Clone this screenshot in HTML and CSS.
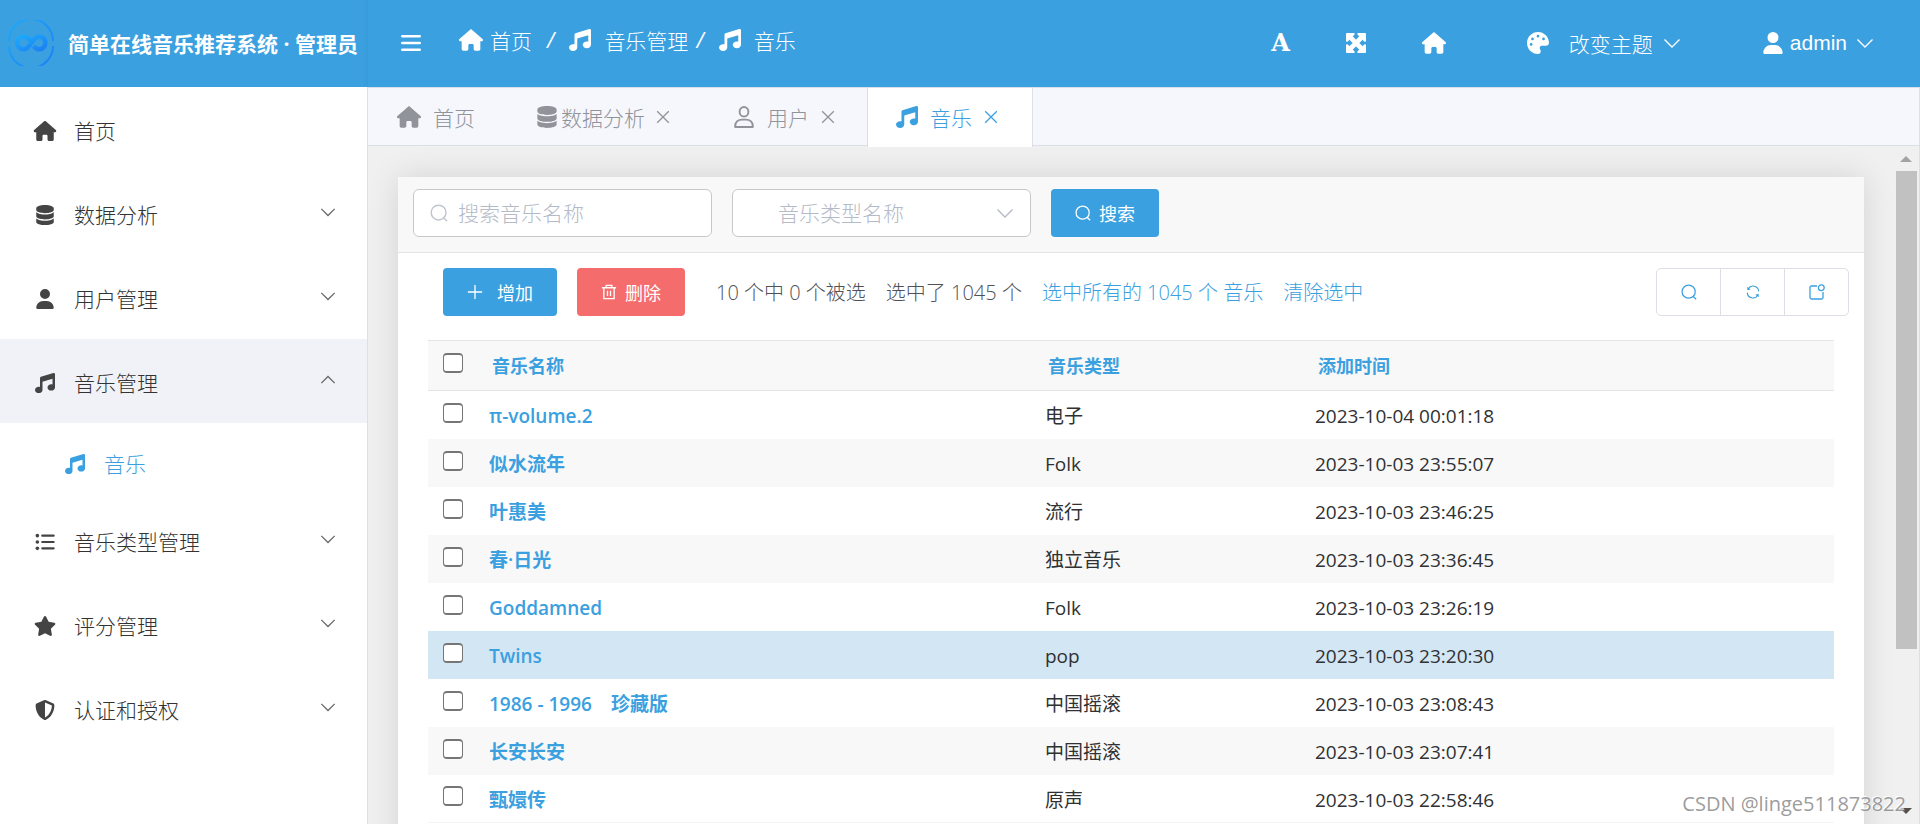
FILE: index.html
```html
<!DOCTYPE html>
<html lang="zh-CN">
<head>
<meta charset="utf-8">
<title>简单在线音乐推荐系统 · 管理员</title>
<link rel="stylesheet" href="styles.css">
</head>
<body>
<svg class="defs" aria-hidden="true">
  <symbol id="home" viewBox="0 0 576 512"><path d="M575.8 255.5c0 18-15 32.1-32 32.1h-32l.7 160.2c0 2.7-.2 5.4-.5 8.1V472c0 22.1-17.9 40-40 40H456c-1.100 0-2.200 0-3.300-.1c-1.400 .1-2.800 .1-4.200 .1H416 392c-22.100 0-40-17.900-40-40V448 384c0-17.700-14.300-32-32-32H256c-17.700 0-32 14.300-32 32v64 24c0 22.100-17.900 40-40 40H160 104c-22.100 0-40-17.900-40-40V287.600H32c-18 0-32-14-32-32.100c0-9 3-17 10-24L266.400 8c7-7 15-8 22-8s15 2 21 7L564.800 231.500c8 7 12 15 11 24z"/></symbol>
  <symbol id="music" viewBox="0 0 512 512"><path d="M499.100 6.300c8.100 6 12.900 15.600 12.900 25.700v72V368c0 44.200-43 80-96 80s-96-35.800-96-80s43-80 96-80c11.200 0 22 1.600 32 4.600V147L192 223.800V432c0 44.200-43 80-96 80s-96-35.800-96-80s43-80 96-80c11.200 0 22 1.600 32 4.600V200 128c0-14.100 9.300-26.600 22.800-30.700l320-96c9.700-2.900 20.200-1.100 28.300 5z"/></symbol>
  <symbol id="user" viewBox="0 0 448 512"><path d="M224 256A128 128 0 1 0 224 0a128 128 0 1 0 0 256zm-45.700 48C79.800 304 0 383.800 0 482.300C0 498.700 13.300 512 29.700 512H418.300c16.400 0 29.700-13.300 29.700-29.700C448 383.800 368.200 304 269.700 304H178.300z"/></symbol>
  <symbol id="data" viewBox="0 0 448 512"><path d="M448 80v48c0 44.200-100.300 80-224 80S0 172.200 0 128V80C0 35.800 100.300 0 224 0S448 35.800 448 80zM393.200 214.700c20.800-7.400 39.900-16.900 54.800-28.600V288c0 44.200-100.300 80-224 80S0 332.200 0 288V186.100c14.900 11.800 34 21.200 54.800 28.600C99.700 230.700 159.500 240 224 240s124.300-9.300 169.200-25.300zM0 346.100c14.900 11.800 34 21.200 54.800 28.600C99.700 390.700 159.500 400 224 400s124.300-9.300 169.200-25.300c20.800-7.400 39.900-16.900 54.800-28.600V432c0 44.200-100.300 80-224 80S0 476.200 0 432V346.100z"/></symbol>
  <symbol id="star" viewBox="0 0 576 512"><path d="M316.900 18C311.600 7 300.400 0 288.100 0s-23.400 7-28.800 18L195 150.300 51.400 171.500c-12 1.800-22 10.200-25.700 21.700s-.7 24.200 7.900 32.700L137.800 329 113.200 474.700c-2 12 3 24.200 12.900 31.300s23 8 33.800 2.300l128.300-68.500 128.300 68.500c10.800 5.700 23.900 4.900 33.800-2.300s14.900-19.300 12.900-31.300L438.500 329 542.700 225.900c8.600-8.500 11.700-21.200 7.900-32.700s-13.700-19.900-25.700-21.700L381.200 150.300 316.900 18z"/></symbol>
  <symbol id="shield" viewBox="0 0 512 512"><path fill-rule="evenodd" d="M256 0c4.600 0 9.200 1 13.400 2.900L457.700 82.800c22 9.300 38.400 31 38.300 57.200c-.5 99.200-41.300 280.700-213.600 363.200c-16.700 8-36.100 8-52.800 0C57.300 420.700 16.500 239.200 16 140c-.1-26.200 16.300-47.900 38.300-57.200L242.700 2.900C246.800 1 251.400 0 256 0zm0 66.800V444.800C394 378 431.100 230.100 432 141.400L256 66.800z"/></symbol>
  <symbol id="palette" viewBox="0 0 512 512"><path fill-rule="evenodd" d="M512 256c0 .9 0 1.800 0 2.700c-.4 36.500-33.600 61.300-70.100 61.300H344c-26.500 0-48 21.500-48 48c0 3.400 .4 6.700 1 9.900c2.100 10.200 6.500 20 10.800 29.900c6.100 13.800 12.100 27.500 12.100 42c0 31.800-21.600 60.700-53.400 62c-3.500 .1-7 .2-10.600 .2C114.600 512 0 397.400 0 256S114.600 0 256 0S512 114.600 512 256zM128 288a32 32 0 1 0 -64 0 32 32 0 1 0 64 0zm0-96a32 32 0 1 0 0-64 32 32 0 1 0 0 64zM288 96a32 32 0 1 0 -64 0 32 32 0 1 0 64 0zm96 96a32 32 0 1 0 0-64 32 32 0 1 0 0 64z"/></symbol>
  <symbol id="list" viewBox="0 0 22 22"><g fill="none" stroke="currentColor" stroke-width="2.400" stroke-linecap="round"><path d="M8 4h12.500M8 11h12.500M8 18h12.500"/></g><circle cx="2.600" cy="4" r="2"/><circle cx="2.600" cy="11" r="2"/><circle cx="2.600" cy="18" r="2"/></symbol>
  <symbol id="bars" viewBox="0 0 20 18"><path d="M1.200 2.200h17.600M1.200 9h17.600M1.200 15.800h17.600" fill="none" stroke="currentColor" stroke-width="2.400" stroke-linecap="round"/></symbol>
  <symbol id="expand" viewBox="0 0 20 20"><path d="M3.500 3.500l13 13M16.500 3.500l-13 13" stroke="currentColor" stroke-width="4.600"/><path d="M1 0h7.200q1 .8.200 1.800L1.800 8.400Q.8 9.200 0 8.200V1Q0 0 1 0zM19 0h-7.200q-1 .8-.2 1.800l6.600 6.600q1 .8 1.800-.2V1q0-1-1-1zM1 20h7.200q1-.8.200-1.800l-6.600-6.600Q.8 10.800 0 11.800V19q0 1 1 1zM19 20h-7.200q-1-.8-.2-1.800l6.600-6.600q1-.8 1.800.2V19q0 1-1 1z"/></symbol>
  <symbol id="down" viewBox="0 0 18 18"><path d="M1.500 5.500L9 13l7.500-7.500" fill="none" stroke="currentColor" stroke-width="1.400"/></symbol>
  <symbol id="up" viewBox="0 0 18 18"><path d="M1.500 12.500L9 5l7.500 7.500" fill="none" stroke="currentColor" stroke-width="1.400"/></symbol>
  <symbol id="close" viewBox="0 0 14 14"><path d="M1.200 1.200l11.600 11.600M12.800 1.200L1.200 12.800" fill="none" stroke="currentColor" stroke-width="1.300"/></symbol>
  <symbol id="search" viewBox="0 0 18 18"><g fill="none" stroke="currentColor" stroke-width="1.400"><circle cx="8.600" cy="8.600" r="7.400"/><path d="M13.600 13.800l3.400 3.400"/></g></symbol>
  <symbol id="person" viewBox="0 0 20 22"><g fill="none" stroke="currentColor" stroke-width="1.900" stroke-linejoin="round"><ellipse cx="10" cy="5.800" rx="4.400" ry="4.800"/><path d="M1.200 21v-1.500Q2 13.600 8 13.600h4q6 0 6.800 5.900V21z"/></g></symbol>
  <symbol id="plus" viewBox="0 0 18 18"><path d="M9 1v16M1 9h16" stroke="currentColor" stroke-width="1.500"/></symbol>
  <symbol id="trash" viewBox="0 0 18 18"><g fill="none" stroke="currentColor" stroke-width="1.500"><path d="M1 4.200h16M5.800 4V1.500h6.400V4M3.200 4.500V16.500h11.600V4.500M7.300 7.500v6M10.700 7.500v6"/></g></symbol>
  <symbol id="refresh" viewBox="0 0 16 16"><g fill="none" stroke="currentColor" stroke-width="1.300"><path d="M14.500 7.300A6.400 6.400 0 0 0 2.600 4.300M1.500 8.700A6.400 6.400 0 0 0 13.400 11.700"/></g><path d="M1.500 2v4l3.800-1zM14.500 14v-4l-3.800 1z"/></symbol>
  <symbol id="open" viewBox="0 0 16 16"><g fill="none" stroke="currentColor" stroke-width="1.300"><path d="M8 2H2.500Q1 2 1 3.500v10Q1 15 2.500 15h10Q14 15 14 13.500V8"/><circle cx="12.300" cy="3.700" r="2.900"/></g></symbol>
</svg>

<div class="app">
  <aside class="sidebar">
    <div class="brand">
      <svg class="logo" viewBox="0 0 46 46" aria-hidden="true">
        <defs><linearGradient id="ring" x1="0" y1="0" x2="1" y2="1"><stop offset="0" stop-color="#1cabfa"/><stop offset="1" stop-color="#1c7ff5"/></linearGradient></defs>
        <g fill="none" stroke="url(#ring)">
          <path stroke-width="2" d="M1 21A22 22 0 0 1 45 21M1 26A22 22 0 0 0 45 26"/>
          <path stroke-width="4.500" d="M24 22c-4-4.500-6-5.500-8.500-5.500a6.300 6.300 0 0 0 0 12.800c7 0 8.500-12.800 15.500-12.800a6.300 6.300 0 0 1 0 12.800c-2.500 0-3.800-1.200-5.500-3"/>
        </g>
      </svg>
      <span>简单在线音乐推荐系统 · 管理员</span>
    </div>
    <nav class="menu">
      <a class="item" href="#"><svg class="i24"><use href="#home"/></svg><span>首页</span></a>
      <a class="item" href="#"><svg class="i24"><use href="#data"/></svg><span>数据分析</span><svg class="arrow"><use href="#down"/></svg></a>
      <a class="item" href="#"><svg class="i24"><use href="#user"/></svg><span>用户管理</span><svg class="arrow"><use href="#down"/></svg></a>
      <a class="item open" href="#"><svg class="i24"><use href="#music"/></svg><span>音乐管理</span><svg class="arrow"><use href="#up"/></svg></a>
      <a class="item sub" href="#"><svg class="i24"><use href="#music"/></svg><span>音乐</span></a>
      <a class="item" href="#"><svg class="i24"><use href="#list"/></svg><span>音乐类型管理</span><svg class="arrow"><use href="#down"/></svg></a>
      <a class="item" href="#"><svg class="i24"><use href="#star"/></svg><span>评分管理</span><svg class="arrow"><use href="#down"/></svg></a>
      <a class="item" href="#"><svg class="i24"><use href="#shield"/></svg><span>认证和授权</span><svg class="arrow"><use href="#down"/></svg></a>
    </nav>
  </aside>

  <div class="page">
    <header class="topbar">
      <button class="toggle" type="button" aria-label="折叠菜单"><svg class="bars"><use href="#bars"/></svg></button>
      <nav class="crumbs">
        <a href="#"><svg class="i24"><use href="#home"/></svg><span class="near">首页</span></a>
        <b class="slash wide">/</b>
        <a href="#"><svg class="i22"><use href="#music"/></svg><span>音乐管理</span></a>
        <b class="slash">/</b>
        <a href="#"><svg class="i22"><use href="#music"/></svg><span>音乐</span></a>
      </nav>
      <div class="tools">
        <button class="letter" type="button" aria-label="字体">A</button>
        <button type="button" aria-label="全屏"><svg class="i20"><use href="#expand"/></svg></button>
        <button type="button" aria-label="主页"><svg class="i24"><use href="#home"/></svg></button>
      </div>
      <button class="theme" type="button"><svg class="i22"><use href="#palette"/></svg><span>改变主题</span><svg class="i18"><use href="#down"/></svg></button>
      <button class="account" type="button"><svg class="i22"><use href="#user"/></svg><span>admin</span><svg class="i18"><use href="#down"/></svg></button>
    </header>

    <nav class="tabs">
      <a class="tab" href="#"><svg class="i24"><use href="#home"/></svg><span>首页</span></a>
      <a class="tab tight" href="#"><svg class="i22"><use href="#data"/></svg><span>数据分析</span><svg class="i14"><use href="#close"/></svg></a>
      <a class="tab" href="#"><svg class="i22"><use href="#person"/></svg><span>用户</span><svg class="i14"><use href="#close"/></svg></a>
      <a class="tab active" href="#"><svg class="i22"><use href="#music"/></svg><span>音乐</span><svg class="i14"><use href="#close"/></svg></a>
    </nav>

    <div class="body">
      <main class="card">
        <form class="filter">
          <label class="field"><svg class="i18"><use href="#search"/></svg><input type="text" placeholder="搜索音乐名称" aria-label="搜索音乐名称"></label>
          <label class="field pick"><select aria-label="音乐类型名称"><option>音乐类型名称</option></select><svg class="i18"><use href="#down"/></svg></label>
          <button class="btn blue" type="button"><svg class="i16"><use href="#search"/></svg>搜索</button>
        </form>
        <div class="actions">
          <button class="btn blue add" type="button"><svg class="i16"><use href="#plus"/></svg>增加</button>
          <button class="btn red" type="button"><svg class="i16"><use href="#trash"/></svg>删除</button>
          <div class="counts">
            <span>10 个中 0 个被选</span>
            <span>选中了 1045 个</span>
            <a href="#">选中所有的 1045 个 音乐</a>
            <a href="#">清除选中</a>
          </div>
          <div class="group">
            <button type="button" aria-label="搜索"><svg class="i16"><use href="#search"/></svg></button>
            <button type="button" aria-label="刷新"><svg class="i14"><use href="#refresh"/></svg></button>
            <button type="button" aria-label="新窗口打开"><svg class="i16"><use href="#open"/></svg></button>
          </div>
        </div>
        <div class="table-wrap">
          <table>
            <colgroup><col class="c-check"><col class="c-name"><col class="c-type"><col></colgroup>
            <thead><tr><th><input type="checkbox" aria-label="全选"></th><th>音乐名称</th><th>音乐类型</th><th>添加时间</th></tr></thead>
            <tbody>
              <tr><td><input type="checkbox" aria-label="选择 π-volume.2"></td><td><a href="#">π-volume.2</a></td><td>电子</td><td>2023-10-04 00:01:18</td></tr>
              <tr><td><input type="checkbox" aria-label="选择 似水流年"></td><td><a href="#">似水流年</a></td><td>Folk</td><td>2023-10-03 23:55:07</td></tr>
              <tr><td><input type="checkbox" aria-label="选择 叶惠美"></td><td><a href="#">叶惠美</a></td><td>流行</td><td>2023-10-03 23:46:25</td></tr>
              <tr><td><input type="checkbox" aria-label="选择 春·日光"></td><td><a href="#">春·日光</a></td><td>独立音乐</td><td>2023-10-03 23:36:45</td></tr>
              <tr><td><input type="checkbox" aria-label="选择 Goddamned"></td><td><a href="#">Goddamned</a></td><td>Folk</td><td>2023-10-03 23:26:19</td></tr>
              <tr class="hover"><td><input type="checkbox" aria-label="选择 Twins"></td><td><a href="#">Twins</a></td><td>pop</td><td>2023-10-03 23:20:30</td></tr>
              <tr><td><input type="checkbox" aria-label="选择 1986 - 1996 珍藏版"></td><td><a href="#">1986 - 1996　珍藏版</a></td><td>中国摇滚</td><td>2023-10-03 23:08:43</td></tr>
              <tr><td><input type="checkbox" aria-label="选择 长安长安"></td><td><a href="#">长安长安</a></td><td>中国摇滚</td><td>2023-10-03 23:07:41</td></tr>
              <tr><td><input type="checkbox" aria-label="选择 甄嬛传"></td><td><a href="#">甄嬛传</a></td><td>原声</td><td>2023-10-03 22:58:46</td></tr>
            </tbody>
          </table>
        </div>
      </main>
      <div class="scrollbar" aria-hidden="true"><i class="tri-up"></i><div class="track"><div class="thumb"></div></div><i class="tri-down"></i></div>
    </div>
  </div>
  <div class="mark">CSDN @linge511873822</div>
</div>
</body>
</html>
```
FILE: styles.css
```css
* { box-sizing: border-box; }
:root {
  --blue: #3ba0e0;
  --line: #dcdfe6;
}
body {
  margin: 0;
  font-family: "Open Sans", "Noto Sans CJK SC", sans-serif;
  font-size: 21px;
  font-weight: 300;
  color: #303133;
  background: #fff;
}
a { color: inherit; text-decoration: none; }
button, input, select { font: inherit; color: inherit; margin: 0; }
button { border: 0; background: none; padding: 0; display: flex; align-items: center; cursor: pointer; }
svg { fill: currentColor; display: block; flex: none; }
.defs { width: 0; height: 0; position: absolute; }
.i14 { width: 14px; height: 14px; }
.i16 { width: 16px; height: 16px; }
.i18 { width: 18px; height: 18px; }
.i20 { width: 20px; height: 20px; }
.i22 { width: 22px; height: 22px; }
.i24 { width: 24px; height: 22px; }

.app { display: flex; height: 100vh; overflow: hidden; position: relative; }

.sidebar { width: 368px; flex: none; display: flex; flex-direction: column; border-right: 1px solid var(--line); }
.brand {
  height: 87px; flex: none; margin-right: -1px; padding: 0 0 2px 8px;
  display: flex; align-items: center; gap: 14px;
  background: var(--blue); color: #fff; font-weight: 700; white-space: nowrap;
  box-shadow: inset -5px 0 5px -4px rgba(0, 0, 0, .05);
}
.logo { width: 46px; height: 46px; }
.item { height: 84px; padding: 3px 31px 0 33px; display: flex; align-items: center; gap: 17px; color: #333; }
.item span { padding-bottom: 2px; }
.item .i24 { height: 20px; color: #444; }
.item .arrow { width: 16px; height: 16px; margin: 0 0 6px auto; color: #666; }
.item.open { background: #f0f2f7; }
.item.sub { height: 75px; padding: 7px 0 0 63px; color: var(--blue); }
.item.sub .i24 { color: inherit; }

.page { flex: 1; min-width: 0; display: flex; flex-direction: column; }
.topbar { height: 87px; flex: none; padding: 0 46px 2px 33px; display: flex; align-items: center; background: var(--blue); color: #fff; }
.bars { width: 20px; height: 18px; }
.crumbs { display: flex; align-items: center; margin-left: 38px; padding-bottom: 5px; }
.crumbs a { display: flex; align-items: center; gap: 13px; }
.crumbs .near { margin-left: -6px; }
.slash { margin: 0 15px 0 8px; font-style: italic; }
.slash.wide { margin-left: 15px; }
.tools { margin-left: auto; display: flex; align-items: center; gap: 56px; }
.letter { font-family: "DejaVu Serif", serif; font-weight: 700; font-size: 24px; }
.theme { margin-left: 81px; gap: 20px; }
.theme .i18 { margin-left: -10px; }
.account { margin-left: 81px; gap: 6px; font-family: "Liberation Sans", sans-serif; }
.account .i18 { margin-left: 3px; }

.tabs { height: 59px; flex: none; display: flex; background: #f5f7fc; border: 1px solid var(--line); border-left: 0; }
.tab { display: flex; align-items: center; gap: 12px; padding: 0 31px 2px 28px; color: #909399; margin-bottom: -2px; border: 1px solid transparent; border-width: 0 1px; }
.tab.tight { gap: 3px; padding-right: 33px; }
.tab.tight .i14 { margin-left: 8px; }
.tab.active { padding-right: 34px; background: #fff; color: var(--blue); border-color: var(--line); position: relative; }

.body { flex: 1; min-height: 0; display: flex; background: #f0f0f0; overflow: hidden; }
.card { flex: 1; margin: 31px 32px 0 30px; background: #fff; box-shadow: 0 0 30px rgba(0, 0, 0, .12); align-self: flex-start; }
.filter { height: 76px; display: flex; gap: 20px; padding: 12px 15px; background: #f8f8f8; border-bottom: 1px solid #e4e4e4; }
.field { width: 299px; height: 48px; display: flex; align-items: center; gap: 10px; padding: 0 16px; background: #fff; border: 1px solid #c8c8c8; border-radius: 6px; color: #c0c4cc; }
.field input, .field select { flex: 1; min-width: 0; border: 0; padding: 0; outline: 0; background: none; appearance: none; }
.field input::placeholder { color: #b4bac6; opacity: 1; }
.field.pick { padding-left: 45px; color: #b4bac6; }
.btn { height: 48px; padding: 0 24px; border-radius: 4px; gap: 8px; font-size: 18px; font-weight: 400; color: #fff; }
.btn.blue { background: var(--blue); }
.btn.red { background: #f56c6c; }
.btn.add { gap: 14px; }

.actions { display: flex; align-items: center; gap: 20px; padding: 15px 15px 24px 45px; }
.counts { display: flex; gap: 20px; margin-left: 11px; padding-top: 2px; font-size: 20px; line-height: 28px; color: #505256; white-space: nowrap; }
.counts a { color: var(--blue); }
.group { margin-left: auto; display: flex; border: 1px solid var(--line); border-radius: 5px; color: var(--blue); }
.group button { width: 63px; height: 46px; justify-content: center; }
.group button + button { width: 64px; border-left: 1px solid var(--line); }

.table-wrap { padding: 0 30px 30px; }
table { width: 100%; table-layout: fixed; border-collapse: separate; border-spacing: 0; }
.c-check { width: 59px; }
.c-name { width: 556px; }
.c-type { width: 270px; }
th { height: 51px; padding: 0 5px 2px; text-align: left; font-size: 18px; font-weight: 700; color: var(--blue); background: #f8f8f8; border: 1px solid #e4e4e4; border-width: 1px 0; }
td { height: 48px; padding: 2px 2px 0; font-size: 19px; line-height: 28px; font-weight: 400; }
td a { color: var(--blue); font-weight: 600; }
tbody tr:nth-child(even) { background: #f8f8f8; }
tbody tr.hover { background: #d3e6f4; }
tbody tr:last-child td { border-bottom: 1px solid #f4f4f4; }
table input {
  appearance: none; display: block; width: 20px; height: 20px; margin: 0 0 7px 13px;
  background: #fff; border: 1px solid #767676; border-width: 2px 1px 2px 1px; border-radius: 4px;
}
th input { margin: 0 0 3px 10px; }

.scrollbar { width: 24px; flex: none; display: flex; flex-direction: column; align-items: center; padding: 10px 3px 10px 0; border-right: 1px solid var(--line); }
.track { flex: 1; width: 21px; padding-top: 9px; }
.thumb { width: 100%; height: 75%; background: #c1c1c1; }
.tri-up, .tri-down { border: 6px solid transparent; }
.tri-up { border-top: 0; border-bottom-color: #a3a3a3; }
.tri-down { border-bottom: 0; border-top-color: #505050; }
.mark { position: absolute; right: 14px; bottom: 6px; font-size: 20px; font-weight: 400; line-height: 28px; color: rgba(130, 130, 130, .8); text-shadow: -1px -1px 0 #fff; }
```
